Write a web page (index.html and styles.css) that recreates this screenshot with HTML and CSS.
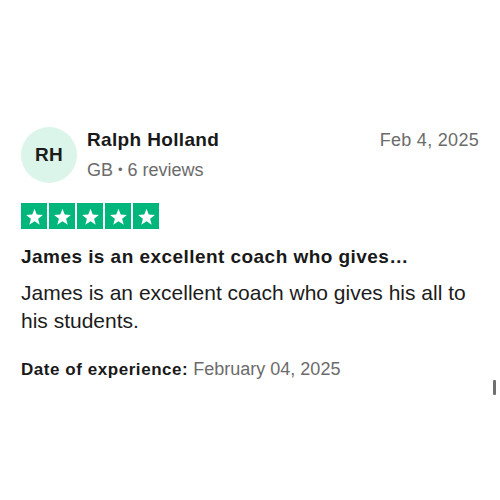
FILE: index.html
```html
<!DOCTYPE html>
<html>
<head>
<meta charset="utf-8">
<link rel="stylesheet" href="styles.css">
</head>
<body>
<div class="review">
  <div class="header">
    <div class="avatar">RH</div>
    <div class="who">
      <div class="name">Ralph Holland</div>
      <div class="meta">GB <span class="dot">•</span> 6 reviews</div>
    </div>
    <div class="posted">Feb 4, 2025</div>
  </div>
  <div class="stars">
    <span class="star"><svg viewBox="0 0 24 24"><path d="M12 3.2l2.55 6.6 7.05.35-5.5 4.45 1.85 6.8L12 17.55 6.05 21.4l1.850-6.8-5.5-4.45 7.05-.35z"/></svg></span>
    <span class="star"><svg viewBox="0 0 24 24"><path d="M12 3.2l2.55 6.6 7.05.35-5.5 4.45 1.85 6.8L12 17.55 6.05 21.4l1.85-6.8-5.5-4.45 7.05-.35z"/></svg></span>
    <span class="star"><svg viewBox="0 0 24 24"><path d="M12 3.2l2.55 6.6 7.05.35-5.5 4.45 1.85 6.8L12 17.55 6.05 21.4l1.85-6.8-5.5-4.45 7.05-.35z"/></svg></span>
    <span class="star"><svg viewBox="0 0 24 24"><path d="M12 3.2l2.55 6.6 7.05.35-5.5 4.45 1.85 6.8L12 17.55 6.05 21.4l1.85-6.8-5.5-4.45 7.05-.35z"/></svg></span>
    <span class="star"><svg viewBox="0 0 24 24"><path d="M12 3.2l2.55 6.6 7.05.35-5.5 4.45 1.85 6.8L12 17.55 6.05 21.4l1.85-6.8-5.5-4.45 7.05-.35z"/></svg></span>
  </div>
  <h2 class="title">James is an excellent coach who gives…</h2>
  <p class="text">James is an excellent coach who gives his all to his students.</p>
  <p class="experience"><strong>Date of experience:</strong> <span class="exp-date">February 04, 2025</span></p>
</div>
<div class="scrollbar"></div>
</body>
</html>
```
FILE: styles.css
```css
html, body {
  margin: 0;
  padding: 0;
  background: #ffffff;
}
body {
  font-family: "Liberation Sans", Arial, sans-serif;
  color: #191919;
  width: 500px;
  height: 500px;
  overflow: hidden;
}
.review {
  padding: 127px 21px 0 21px;
}
.header {
  display: flex;
  align-items: flex-start;
}
.avatar {
  width: 56px;
  height: 56px;
  border-radius: 50%;
  background: #dcf5ea;
  display: flex;
  align-items: center;
  justify-content: center;
  font-weight: bold;
  font-size: 19px;
  letter-spacing: 0.3px;
  color: #1c1c1c;
  flex-shrink: 0;
}
.who {
  margin-left: 10px;
  padding-top: 1px;
  flex: 1;
}
.name {
  font-size: 19px;
  font-weight: bold;
  line-height: 24px;
  letter-spacing: 0.35px;
}
.meta {
  margin-top: 6px;
  font-size: 18px;
  line-height: 24px;
  color: #6b6b6b;
}
.dot {
  font-size: 13px;
  position: relative;
  top: -2px;
}
.posted {
  padding-top: 1px;
  font-size: 18px;
  line-height: 24px;
  color: #6b6b6b;
  letter-spacing: 0.3px;
}
.stars {
  display: flex;
  gap: 2px;
  margin-top: 19px;
}
.star {
  width: 26px;
  height: 26px;
  background: #00b67a;
  display: flex;
  align-items: center;
  justify-content: center;
}
.star svg {
  width: 21px;
  height: 21px;
  fill: #ffffff;
}
.title {
  margin: 16px 0 0 0;
  font-size: 19px;
  font-weight: bold;
  line-height: 24px;
  letter-spacing: 0.45px;
}
.text {
  margin: 10px 0 0 0;
  font-size: 21px;
  line-height: 28px;
  color: #1c1c1c;
}
.experience {
  margin: 22px 0 0 0;
  font-size: 18px;
  line-height: 24px;
}
.experience strong {
  font-size: 17px;
  letter-spacing: 0.55px;
}
.exp-date {
  color: #6b6b6b;
}
.scrollbar {
  position: absolute;
  left: 493px;
  top: 380px;
  width: 3px;
  height: 15px;
  border-radius: 1px;
  background: #707070;
}
```
